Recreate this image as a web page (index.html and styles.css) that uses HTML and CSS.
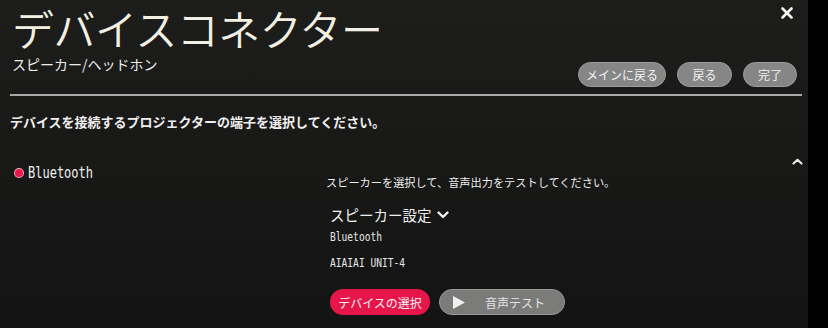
FILE: index.html
```html
<!DOCTYPE html>
<html lang="ja">
<head>
<meta charset="utf-8">
<link rel="stylesheet" href="styles.css">
</head>
<body>
<div class="screen">
  <header class="header">
    <div class="titles">
      <h1 class="title">デバイスコネクター</h1>
      <div class="subtitle">スピーカー/ヘッドホン</div>
    </div>
    <div class="header-right">
      <svg class="close" width="12" height="12" viewBox="0 0 12 12"><path d="M1.5 1.5 L10.5 10.5 M10.5 1.5 L1.5 10.5" stroke="#f4f4ec" stroke-width="2.6" stroke-linecap="round"/></svg>
      <div class="top-buttons">
        <span class="pill w-main">メインに戻る</span>
        <span class="pill w-back">戻る</span>
        <span class="pill w-done">完了</span>
      </div>
    </div>
  </header>
  <div class="rule"></div>
  <p class="instruction">デバイスを接続するプロジェクターの端子を選択してください。</p>
  <section class="section">
    <div class="port">
      <span class="dot"></span><span class="mono port-name">Bluetooth</span>
    </div>
    <div class="detail">
      <p class="hint">スピーカーを選択して、音声出力をテストしてください。</p>
      <div class="setting">スピーカー設定
        <svg class="chev" width="12" height="8" viewBox="0 0 12 8"><path d="M1.5 1.5 L6 6 L10.5 1.5" fill="none" stroke="#f0f0f0" stroke-width="2.4" stroke-linecap="round" stroke-linejoin="round"/></svg>
      </div>
      <div class="mono small first">Bluetooth</div>
      <div class="mono small device">AIAIAI UNIT-4</div>
      <div class="actions">
        <span class="btn btn-red">デバイスの選択</span>
        <span class="btn btn-gray"><svg class="play" width="12" height="13" viewBox="0 0 12 13"><path d="M0 0 L12 6.5 L0 13 Z" fill="#f0f0f0"/></svg><span class="btn-label">音声テスト</span></span>
      </div>
    </div>
    <svg class="up" width="11" height="7" viewBox="0 0 11 7"><path d="M1.5 5.5 L5.5 1.8 L9.5 5.5" fill="none" stroke="#e8e8e8" stroke-width="2.2" stroke-linecap="round" stroke-linejoin="round"/></svg>
  </section>
</div>
</body>
</html>
```
FILE: styles.css
```css
html, body {
  margin: 0;
  padding: 0;
  background: #000;
}
body {
  width: 828px;
  height: 328px;
  overflow: hidden;
  font-family: "Noto Sans CJK JP", "Noto Sans", sans-serif;
  color: #ececec;
}
.screen {
  width: 808px;
  height: 328px;
  box-sizing: border-box;
  padding-left: 10px;
  background: linear-gradient(180deg, #1d1d1c 0%, #181817 50%, #141414 100%);
}
.header {
  display: flex;
  justify-content: space-between;
  padding-right: 11px;
}
.titles {
  padding-left: 2px;
}
.title {
  margin: 2px 0 0 0;
  font-size: 42px;
  font-weight: 350;
  line-height: 52px;
  color: #f1f0e2;
  letter-spacing: -0.5px;
}
.subtitle {
  font-size: 14px;
  line-height: 18px;
  margin-top: 1px;
  color: #ececec;
}
.header-right {
  display: flex;
  flex-direction: column;
  align-items: flex-end;
}
.close {
  margin-top: 7px;
  margin-right: 4px;
}
.top-buttons {
  display: flex;
  gap: 11px;
  margin-top: 43px;
}
.pill {
  height: 25px;
  box-sizing: border-box;
  border-radius: 13px;
  background: #868686;
  border: 1px solid #9d9d9d;
  color: #f2f2f2;
  font-size: 12px;
  display: flex;
  align-items: center;
  justify-content: center;
}
.w-main { width: 88px; }
.w-back { width: 55px; }
.w-done { width: 54px; }
.rule {
  height: 2px;
  width: 792px;
  background: #a9a9a9;
  margin-top: 7px;
}
.instruction {
  margin: 17px 0 0 0;
  font-size: 13px;
  font-weight: 700;
  line-height: 18px;
  color: #f0f0f0;
}
.section {
  display: flex;
  margin-top: 32px;
}
.port {
  width: 316px;
  display: flex;
  align-items: center;
  height: 18px;
  margin-top: 1px;
}
.dot {
  width: 8px;
  height: 8px;
  border-radius: 50%;
  background: #e8164c;
  box-shadow: 0 0 0 1px #f3a7b9;
  margin-left: 5px;
  margin-right: 5px;
}
.mono {
  font-family: "DejaVu Sans Mono", "Liberation Mono", monospace;
}
.port-name {
  font-size: 12px;
  color: #f0f0f0;
  transform: scaleY(1.25);
  display: inline-block;
}
.detail {
  flex: 1;
  padding-top: 11px;
}
.hint {
  margin: 0;
  font-size: 11.2px;
  line-height: 16px;
  color: #eeeeee;
}
.setting {
  margin-top: 15px;
  margin-left: 4px;
  font-size: 14.5px;
  line-height: 20px;
  display: flex;
  align-items: center;
  gap: 5px;
  color: #f0f0f0;
}
.small {
  font-size: 9.6px;
  line-height: 14px;
  margin-left: 4px;
  color: #e8e8e8;
  transform: scaleY(1.3);
  transform-origin: left center;
}
.first {
  margin-top: 5px;
}
.device {
  margin-top: 12px;
}
.actions {
  display: flex;
  gap: 9px;
  margin-top: 19px;
  margin-left: 4px;
}
.btn {
  height: 26px;
  box-sizing: border-box;
  border-radius: 13px;
  display: flex;
  align-items: center;
  font-size: 12px;
  color: #f4f4f4;
}
.btn-red {
  width: 100px;
  justify-content: center;
  background: #e6164b;
}
.btn-gray {
  width: 126px;
  background: #7b7b7a;
  border: 1px solid #9a9a9a;
  padding-left: 13px;
}
.play {
  flex: none;
}
.btn-label {
  margin-left: 20px;
  color: #e6e6e6;
}
.up {
  margin-top: -5px;
  margin-right: 5px;
}
```
